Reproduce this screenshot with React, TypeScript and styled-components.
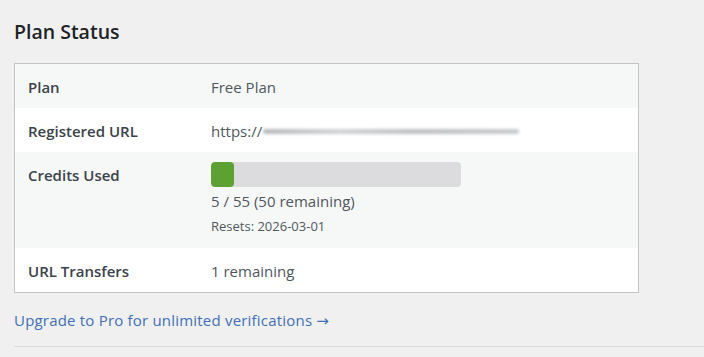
import styled, { createGlobalStyle } from "styled-components";

const GlobalStyle = createGlobalStyle`
    html, body {
        margin: 0;
        background: #f0f0f1;
        font-family: "Segoe UI", "Open Sans", "Noto Sans", sans-serif;
        color: #3c434a;
    }
`;

const Page = styled.div`
    padding: 19px 0 0 14px;
`;

const Heading = styled.h2`
    margin: 0;
    font-size: 19.5px;
    line-height: 26px;
    font-weight: 600;
    color: #1d2327;
`;

const StatusTable = styled.div`
    margin-top: 18px;
    width: 623px;
    border: 1px solid #c3c4c7;
    background: #fff;
`;

const Row = styled.div<{ $striped?: boolean }>`
    display: grid;
    grid-template-columns: 183px 1fr;
    background: ${(props) => (props.$striped ? "#f6f7f7" : "#fff")};
`;

const Label = styled.div`
    padding: 13px 13px 11px;
    font-size: 15px;
    line-height: 20px;
    font-weight: 600;
    color: #3c434a;
`;

const Value = styled.div<{ $tight?: boolean }>`
    padding: ${(props) => (props.$tight ? "10px 13px 13px" : "13px 13px 11px")};
    font-size: 15px;
    line-height: 20px;
    color: #50575e;
`;

const UrlText = styled.span`
    display: inline-flex;
    align-items: center;
`;

const BlurredUrl = styled.span`
    display: inline-block;
    width: 256px;
    height: 5px;
    margin-left: 1px;
    background: linear-gradient(90deg, #b8b9bb, #d2d3d5 30%, #bfc0c2 60%, #c9cacc);
    filter: blur(1.5px);
    border-radius: 2px;
`;

const Track = styled.div`
    width: 250px;
    height: 25px;
    border-radius: 4px;
    background: #dcdcde;
    overflow: hidden;
`;

const Fill = styled.div`
    height: 100%;
    border-radius: 4px;
    background: #5ca132;
`;

const Count = styled.div`
    margin-top: 4px;
`;

const Resets = styled.div`
    margin-top: 6px;
    font-size: 13px;
    line-height: 18px;
`;

const UpgradeLink = styled.a`
    display: block;
    margin-top: 17px;
    font-size: 15px;
    line-height: 20px;
    letter-spacing: 0.2px;
    color: #3f6fb6;
    text-decoration: none;
`;

const Arrow = styled.span`
    font-family: "DejaVu Sans", sans-serif;
    font-size: 15px;
`;

const Divider = styled.hr`
    margin: 15px 0 0;
    border: 0;
    border-top: 1px solid #dcdcde;
`;

export default function App() {
    const used = 5;
    const total = 55;

    return (
        <>
            <GlobalStyle />
            <Page>
                <Heading>Plan Status</Heading>
                <StatusTable>
                    <Row $striped>
                        <Label>Plan</Label>
                        <Value>Free Plan</Value>
                    </Row>
                    <Row>
                        <Label>Registered URL</Label>
                        <Value>
                            <UrlText>
                                https://
                                <BlurredUrl />
                            </UrlText>
                        </Value>
                    </Row>
                    <Row $striped>
                        <Label>Credits Used</Label>
                        <Value $tight>
                            <Track>
                                <Fill style={{ width: `${(used / total) * 100}%` }} />
                            </Track>
                            <Count>
                                {used} / {total} ({total - used} remaining)
                            </Count>
                            <Resets>Resets: 2026-03-01</Resets>
                        </Value>
                    </Row>
                    <Row>
                        <Label>URL Transfers</Label>
                        <Value>1 remaining</Value>
                    </Row>
                </StatusTable>
                <UpgradeLink href="#">
                    Upgrade to Pro for unlimited verifications <Arrow>→</Arrow>
                </UpgradeLink>
                <Divider />
            </Page>
        </>
    );
}
